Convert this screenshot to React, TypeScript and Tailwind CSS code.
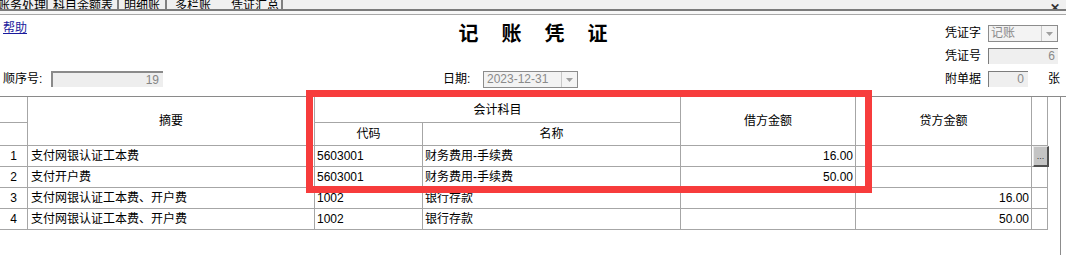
import React from "react";

const rows = [
  { no: "1", memo: "支付网银认证工本费", code: "5603001", name: "财务费用-手续费", debit: "16.00", credit: "" },
  { no: "2", memo: "支付开户费", code: "5603001", name: "财务费用-手续费", debit: "50.00", credit: "" },
  { no: "3", memo: "支付网银认证工本费、开户费", code: "1002", name: "银行存款", debit: "", credit: "16.00" },
  { no: "4", memo: "支付网银认证工本费、开户费", code: "1002", name: "银行存款", debit: "", credit: "50.00" },
];

function DropArrow() {
  return (
    <div className="w-[16px] h-full bg-[#f4f4f4] border-l border-[#c8c8c8] flex items-center justify-center">
      <svg width="7" height="4" viewBox="0 0 7 4">
        <path d="M0 0h7L3.5 4z" fill="#a0a0a0" />
      </svg>
    </div>
  );
}

export default function App() {
  const cell = "border-r border-b border-[#a6a6a6]";

  return (
    <div className="relative w-[1066px] h-[255px] overflow-hidden bg-white text-[12px] text-black font-['Liberation_Sans','Noto_Sans_CJK_SC',sans-serif]">
      {/* обрезанная полоса вкладок */}
      <div className="h-[9px] bg-[#f0f0f0] overflow-hidden flex items-end relative">
        <div className="flex h-[16px] -mb-[6px] leading-[14px] text-[12px]">
          <div className="w-[50px] -ml-[2px] border-r-2 border-[#808080] whitespace-nowrap overflow-hidden">账务处理</div>
          <div className="w-[71px] pl-[5px] border-r-2 border-[#808080] whitespace-nowrap overflow-hidden">科目余额表</div>
          <div className="w-[48px] pl-[5px] border-r-2 border-[#808080] whitespace-nowrap overflow-hidden">明细账</div>
          <div className="w-[116px] pl-[8px] border-r-2 border-[#808080] whitespace-nowrap flex gap-[20px] overflow-hidden">
            <span>多栏账</span>
            <span>凭证汇总</span>
          </div>
        </div>
        <div className="ml-auto mr-[6px] -mb-[5px] text-[12px] font-bold leading-[12px] text-[#333]">✕</div>
      </div>
      <div className="h-[2px] bg-[#7a7a7a]" />
      <div className="h-[3px] bg-[#f7f7f7]" />
      <div className="h-[1px] bg-[#a8a8a8]" />

      {/* шапка формы */}
      <div className="h-[81px] flex flex-col">
        <div className="h-[31px] grid grid-cols-[1fr_auto_1fr]">
          <div className="pl-[3px] pt-[4px]">
            <a className="text-[#1a1a9c] underline leading-[16px]">帮助</a>
          </div>
          <div className="pt-[8px] flex gap-[23px] text-[20px] leading-[20px] font-bold font-['Noto_Sans_CJK_SC',serif]">
            <span>记</span>
            <span>账</span>
            <span>凭</span>
            <span>证</span>
          </div>
          <div className="flex justify-end items-start pt-[10px] pr-[8px]">
            <span className="leading-[17px] mr-[7px]">凭证字</span>
            <div className="w-[70px] h-[17px] flex border border-[#8c8c8c] bg-[#f3f3f3]">
              <span className="flex-1 pl-[2px] leading-[15px] text-[#8a8a8a]">记账</span>
              <DropArrow />
            </div>
          </div>
        </div>

        <div className="h-[23px] flex justify-end items-start pt-[2px] pr-[8px]">
          <span className="leading-[16px] mr-[7px]">凭证号</span>
          <div className="w-[70px] h-[16px] border-t border-l border-[#7c7c7c] bg-[#efefef] text-right pr-[3px] leading-[15px] text-[#8a8a8a]">
            6
          </div>
        </div>

        <div className="h-[27px] flex items-start pt-[2px] pl-[3px] pr-[6px]">
          <span className="w-[48px] leading-[16px]">顺序号:</span>
          <div className="w-[112px] h-[16px] border-t-2 border-l-2 border-[#8a8a8a] bg-[#eeeeee] text-right pr-[4px] leading-[14px] text-[#858585]">
            19
          </div>
          <span className="ml-[280px] w-[40px] leading-[16px]">日期:</span>
          <div className="w-[95px] h-[17px] flex border border-[#8c8c8c] bg-[#f3f3f3]">
            <span className="flex-1 pl-[3px] leading-[15px] text-[#8a8a8a]">2023-12-31</span>
            <DropArrow />
          </div>
          <span className="ml-auto leading-[16px] mr-[7px]">附单据</span>
          <div className="w-[40px] h-[16px] border-t border-l border-[#7c7c7c] bg-[#efefef] text-right pr-[4px] leading-[15px] text-[#8a8a8a]">
            0
          </div>
          <span className="ml-[20px] leading-[16px]">张</span>
        </div>
      </div>

      {/* таблица проводок */}
      <div className="border-t border-[#8a8a8a] flex h-[159px]">
        <div className="w-[1048px] grid grid-cols-[28px_287px_108px_258px_175px_176px_16px] grid-rows-[26px_23px_21px_21px_21px_21px] self-start">
          <div className={`${cell} col-start-1 row-start-1`} />
          <div className={`${cell} col-start-1 row-start-2`} />
          <div className={`${cell} col-start-2 row-start-1 row-span-2 flex items-center justify-center`}>摘要</div>
          <div className={`${cell} col-start-3 col-span-2 row-start-1 flex items-center justify-center`}>会计科目</div>
          <div className={`${cell} col-start-3 row-start-2 flex items-center justify-center`}>代码</div>
          <div className={`${cell} col-start-4 row-start-2 flex items-center justify-center`}>名称</div>
          <div className={`${cell} col-start-5 row-start-1 row-span-2 flex items-center justify-center`}>借方金额</div>
          <div className={`${cell} col-start-6 row-start-1 row-span-2 flex items-center justify-center`}>贷方金额</div>
          <div className={`${cell} col-start-7 row-start-1 row-span-2`} />

          {rows.map((r) => (
            <React.Fragment key={r.no}>
              <div className={`${cell} flex items-center justify-center`}>{r.no}</div>
              <div className={`${cell} flex items-center pl-[3px] whitespace-nowrap`}>{r.memo}</div>
              <div className={`${cell} flex items-center pl-[2px]`}>{r.code}</div>
              <div className={`${cell} flex items-center pl-[2px] whitespace-nowrap`}>{r.name}</div>
              <div className={`${cell} flex items-center justify-end pr-[2px]`}>{r.debit}</div>
              <div className={`${cell} flex items-center justify-end pr-[2px]`}>{r.credit}</div>
              <div className={`${cell} relative`}>
                {r.no === "1" && (
                  <div className="absolute left-[1px] top-0 w-[16px] h-[21px] bg-[#c4c4c4] border-t border-l border-t-[#e8e8e8] border-l-[#e8e8e8] border-r-2 border-b-2 border-r-[#505050] border-b-[#505050] flex items-center justify-center text-[9px] leading-none text-[#333]">
                    ...
                  </div>
                )}
              </div>
            </React.Fragment>
          ))}
        </div>
        <div className="w-[12px]" />
        <div className="w-[6px] h-full border-l border-[#8c8c8c]" />
      </div>

      {/* красная рамка-выделение */}
      <div className="absolute left-[306px] top-[90px] w-[566px] h-[103px] border-[7px] border-[#f73c3c]" />
    </div>
  );
}
